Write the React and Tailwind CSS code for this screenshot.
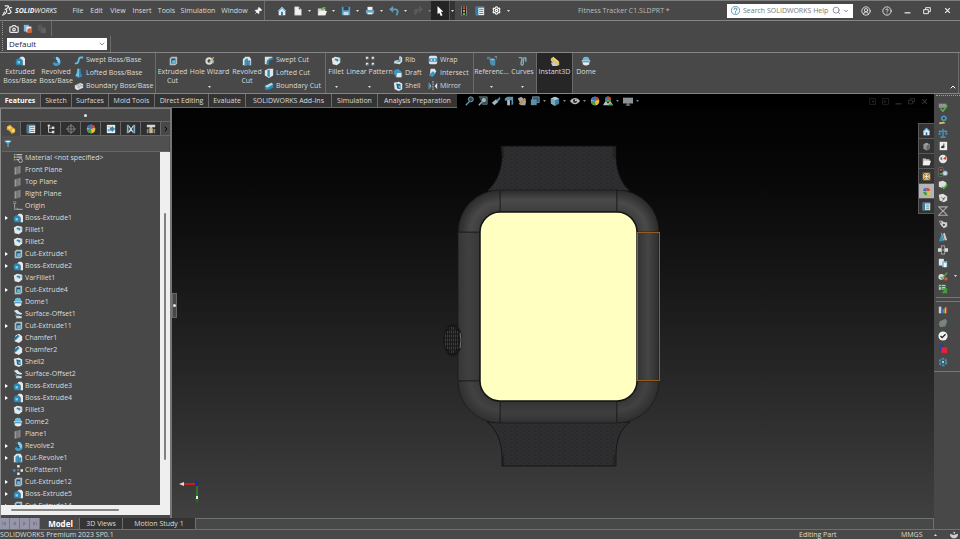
import { ChevronDown, ChevronUp, ChevronRight, Search, Settings, CircleUserRound, CircleHelp, Pin, Camera } from 'lucide-react'
import clsx from 'clsx'

// 12x12 drawings shared by the ribbon, the tree and the side bars
const GLYPHS = {
    extrude: (
        <>
            <path d="M5 3 7 1h3l2 2v8H9V6L7 5z" fill="#e4e8ea" />
            <path d="M1 5 3 3h4l2 2v6H2L1 9z" fill="#2b86b4" />
            <path d="M3 6h3v3H3z" fill="#7cc9ee" />
        </>
    ),
    revolve: (
        <>
            <path d="M2 2h5a5 5 0 1 1-5 7l2-2a3 3 0 1 0 1-4z" fill="#3f9cc9" />
            <path d="M6 1a5 5 0 0 1 4 8L6 6z" fill="#86cdec" />
            <circle cx="6" cy="6" r="1.6" fill="#205b7a" />
        </>
    ),
    sweep: <path d="M1 10h2c4 0 1-7 5-7h3" fill="none" stroke="#6bbbe0" strokeWidth="2.2" />,
    loft: (
        <>
            <path d="M4 1h4v4l2 5-4 2-5-2 2-4z" fill="#2f86b2" />
            <path d="M4 1h2v10l-4-2 2-4z" fill="#73c1e4" />
        </>
    ),
    boundary: (
        <>
            <path d="M1 5 8 2l3 2v4l-7 3-3-2z" fill="#dfe3e5" />
            <path d="M2 6l7-3M4 8l7-3M4 4l3 5M7 3l3 4" stroke="#8b9498" strokeWidth=".7" />
        </>
    ),
    cut: (
        <>
            <path d="M2 3 4 1h7v8l-2 2H2z" fill="#b4bdc1" />
            <path d="M4 3h5v6H4z" fill="#1f4f68" />
            <path d="M5 5h3l1-1v5H5z" fill="#69b8dc" />
        </>
    ),
    hole: (
        <>
            <circle cx="5" cy="6" r="4.5" fill="#d8dcde" />
            <circle cx="5" cy="6" r="2" fill="#3b4347" />
            <path d="M5 7l5-6 1 1-5 6z" fill="#e4a94a" />
            <path d="M9 4l2 2-1 3-2-1z" fill="#7ec3e2" />
        </>
    ),
    revcut: (
        <>
            <path d="M1 11V4l3-3h5l2 3v7H8V6L6 4v7z" fill="#dfe4e6" />
            <path d="M3 5l2-2h2v8H3zM8 5h2v6H8z" fill="#3992c0" />
        </>
    ),
    sweepcut: (
        <>
            <path d="M1 11V2h9v3H6v6z" fill="#dce1e3" />
            <path d="M3 11c0-5 2-7 8-8v2c-4 0-5 2-5 6z" fill="#2d82ae" />
        </>
    ),
    loftcut: (
        <>
            <path d="M1 3l4-2h6v8l-5 3-5-3z" fill="#e2e6e8" />
            <path d="M4 2h3v9L4 10z" fill="#3290bf" />
        </>
    ),
    boundcut: (
        <>
            <path d="M1 6l8-4 2 2v4l-7 3-3-1z" fill="#2f89b8" />
            <path d="M1 6l8-4 2 2-7 4z" fill="#a5dbf2" />
        </>
    ),
    fillet: (
        <>
            <path d="M1 3l4-2 6 1v6l-4 3-5-1z" fill="#e6e9ea" />
            <path d="M5 3c3 0 4 1 4 3l-2 1c0-2-1-2-3-2z" fill="#2e89b6" />
            <path d="M9 2l2 1v4L9 6z" fill="#a7d5e8" />
        </>
    ),
    pattern: (
        <>
            <path d="M1 1h3v3H1zM8 1h3v3H8zM1 8h3v3H1zM8 8h3v3H8z" fill="#e1e5e7" />
            <path d="M2 3h2v1H2zM9 3h2v1H9zM2 10h2v1H2zM9 10h2v1H9z" fill="#2c84b2" />
        </>
    ),
    rib: (
        <>
            <path d="M8 1l3 2v5l-3 3-7-1 1-3 5-1z" fill="#d6dde0" />
            <path d="M9 2v6l-6 1c3-1 5-3 6-7z" fill="#3f9ccb" />
        </>
    ),
    draft: (
        <>
            <path d="M1 3l5-2 5 4v6H4L1 7z" fill="#3d96c2" />
            <path d="M5 6h5v5H4z" fill="#e2e6e8" />
        </>
    ),
    shell: (
        <>
            <path d="M1 2l6-1 4 2v7l-4 2-5-2z" fill="#e2e6e8" />
            <path d="M4 3l5 1v6l-4-1z" fill="#1f6288" />
            <path d="M6 5l3 1v3l-2-1z" fill="#65b6dc" />
        </>
    ),
    wrap: (
        <>
            <rect x="1" y="1" width="10" height="10" rx="2" fill="#dce2e5" />
            <path d="M1 4h10v4H1z" fill="#3a93c0" />
            <path d="M3 5h2v2H3zM7 5h2v2H7z" fill="#d9edf6" />
        </>
    ),
    intersect: (
        <>
            <path d="M3 1h5l2 3-3 5H2z" fill="#e0e5e7" />
            <path d="M1 8l5-4 3 3-4 4z" fill="#3a95c3" />
        </>
    ),
    mirror: (
        <>
            <path d="M1 2l3 4-3 4zM11 2L8 6l3 4z" fill="#e2e6e8" />
            <path d="M1 2l2 2v4l-2 2z" fill="#3a95c3" />
            <path d="M6 0v12" stroke="#d9dde0" strokeDasharray="2 1" />
        </>
    ),
    reference: (
        <>
            <path d="M0 1h4v3H0z" fill="#47819e" />
            <path d="M3 4l3-1 4 1v7l-3 1-3-2z" fill="#4b8fb2" />
            <path d="M3 4l3-1 4 1-3 1z" fill="#8cc0d8" />
            <path d="M9 1h3v3" fill="none" stroke="#7fb3cc" />
        </>
    ),
    curves: <path d="M1 2h3c3 0-3 9 1 9 3 0 0-9 3-9s0 3 2 5" fill="none" stroke="#7fb0c6" strokeWidth="1.6" />,
    instant: (
        <>
            <path d="M1 3l3-2 7 6v4H9L1 6z" fill="#e5c35c" />
            <path d="M1 8l4-1 5 4-2 1H3z" fill="#c3cace" />
            <path d="M4 2l6 5" stroke="#fff3b0" />
        </>
    ),
    dome: (
        <>
            <path d="M2 5a4 4 0 0 1 8 0z" fill="#69b9df" />
            <path d="M2 7h8v3q-4 3-8 0z" fill="#e8ebec" />
            <path d="M1 5h10v2H1z" fill="#b9dff0" />
            <path d="M2 6.500h8v1H2z" fill="#2a7ca8" />
        </>
    ),
    chamfer: (
        <>
            <path d="M3 3l4-2 4 3v5l-4 3-5-2z" fill="#e6e9ea" />
            <path d="M1 7l5-5 2 2-5 5z" fill="#378fbc" />
            <path d="M2 7l4-4" stroke="#123d55" />
        </>
    ),
    surface: (
        <>
            <path d="M1 2l4-1 3 3 3 1-1 2-5-1z" fill="#dfe3e5" />
            <path d="M3 7l4 1 4 1-1 2H4z" fill="#cfd5d8" />
            <path d="M2 5l3 2 2 1-3 1z" fill="#3c95c0" />
        </>
    ),
    plane: (
        <>
            <path d="M2 3l7-2v9l-7 2z" fill="#858585" />
            <path d="M2 3l2-1v9l-2 1zM6 2v9" fill="#a9a9a9" stroke="#5f5f5f" strokeWidth=".7" />
        </>
    ),
    material: (
        <>
            <path d="M4 2h7M4 5h7M4 8h4" stroke="#bdbdbd" strokeWidth="1.500" />
            <path d="M1 1h2v2H1z" fill="#53b1da" />
            <path d="M1 4h2v2H1z" fill="#d7b64b" />
            <path d="M1 7h2v2H1z" fill="#6fb54c" />
            <circle cx="9" cy="9" r="2.300" fill="#444" stroke="#ccc" />
        </>
    ),
    origin: (
        <>
            <path d="M2 3v7h8" fill="none" stroke="#a0a0a0" strokeWidth="1.200" />
            <circle cx="2" cy="2" r="1.500" fill="none" stroke="#a0a0a0" />
            <path d="M5 8v2h7" fill="none" stroke="#a0a0a0" />
        </>
    ),
    circular: (
        <>
            <path d="M5 0h3v3H5zM5 9h3v3H5zM9 5h3v3H9z" fill="#e2e6e8" />
            <path d="M0 5h3v3H0z" fill="#3a95c3" />
            <path d="M5 6h2" stroke="#9ad0e8" />
        </>
    ),
    home: (
        <>
            <path d="M6 1l5 5h-1v5H2V6H1z" fill="#e9edef" />
            <path d="M6 1l5 5H9L6 3 3 6H1z" fill="#65b0d4" />
            <path d="M5 7h2v4H5z" fill="#236b92" />
        </>
    ),
    file: <path d="M2 1h5l3 3v7H2z M7 1v3h3" fill="#f1f1f1" stroke="#b5b5b5" strokeWidth=".6" />,
    open: (
        <>
            <path d="M1 3h4l1 1h4v7H1z" fill="#cfcfcf" />
            <path d="M3 6h9l-2 5H1z" fill="#f2f2f2" />
            <path d="M6 5c0-3 2-3 4-3" fill="none" stroke="#6ac03e" strokeWidth="1.800" />
        </>
    ),
    folder: (
        <>
            <path d="M1 2h4l1 1h4v8H1z" fill="#c2c2c2" />
            <path d="M3 5h9l-2 6H1z" fill="#f2f2f2" />
        </>
    ),
    save: (
        <>
            <path d="M1 1h10v10H1z" fill="#5a9fc2" />
            <path d="M3 1h6v4H3z" fill="#2f4652" />
            <path d="M3 7h6v4H3z" fill="#c6dbe5" />
        </>
    ),
    print: (
        <>
            <path d="M3 1h6v4H3z" fill="#eef1f2" />
            <path d="M1 5h10v4H1z" fill="#66aacb" />
            <path d="M3 8h6v2H3z" fill="#f2f5f6" />
        </>
    ),
    undo: (
        <>
            <path d="M4 4h4c3 0 3 4 1 7" fill="none" stroke="#5f9cba" strokeWidth="2.200" />
            <path d="M0 4l5-4v8z" fill="#5f9cba" />
        </>
    ),
    redo: <path d="M8 4H4C1 4 1 8 3 11M8 1l3 3-3 3z" fill="#5a5a5a" stroke="#5a5a5a" strokeWidth="1.500" />,
    cursor: <path d="M3 0l7 7H7l2 4-2 1-2-4-2 2z" fill="#fff" />,
    traffic: (
        <>
            <rect x="3" y="0" width="6" height="12" rx="1.500" fill="#222" stroke="#aaa" strokeWidth=".8" />
            <circle cx="6" cy="2.500" r="1.400" fill="#e04b35" />
            <circle cx="6" cy="6" r="1.400" fill="#bfa04a" />
            <circle cx="6" cy="9.500" r="1.400" fill="#5ac24a" />
        </>
    ),
    list: (
        <>
            <path d="M1 1h10v10H1z" fill="#e9eef0" />
            <path d="M1 1h3v10H1zM1 1h10v1H1z" fill="#347ea3" />
            <path d="M5 4h5M5 6.500h5M5 9h5" stroke="#397a9a" />
        </>
    ),
    tree: (
        <>
            <path d="M3 1v9h4M3 5h4" fill="none" stroke="#ddd" />
            <path d="M2 1h3v2H2zM7 3h3v3H7zM7 8h3v3H7z" fill="#dedede" />
        </>
    ),
    part: (
        <>
            <path d="M1 3l4-2 3 3 3 2v4l-4 2-3-4-3-1z" fill="#e5ae31" />
            <path d="M2 4l3-1 1 2-2 1zM7 7l3-1v3l-2 1z" fill="#ffe08a" />
        </>
    ),
    target: (
        <>
            <circle cx="6" cy="6" r="4" fill="none" stroke="#8d8d8d" />
            <path d="M6 0v12M0 6h12" stroke="#8d8d8d" />
        </>
    ),
    ball: (
        <>
            <circle cx="6" cy="6" r="5" fill="#e8e8e8" />
            <path d="M6 6V1a5 5 0 0 0-5 4z" fill="#3b6fc4" />
            <path d="M6 6l5-1a5 5 0 0 0-5-4z" fill="#d8402f" />
            <path d="M6 6l5-1a5 5 0 0 1-4 6z" fill="#e6bc32" />
            <path d="M6 6l1 5a5 5 0 0 1-6-5z" fill="#4a9e3c" />
        </>
    ),
    // appearance ball standing on a small scene
    scene: (
        <>
            <circle cx="6" cy="4" r="3.500" fill="#4a9e3c" />
            <path d="M6 4V.5a3.500 3.500 0 0 1 3.500 3.500z" fill="#d8402f" />
            <path d="M6 4V.5A3.500 3.500 0 0 0 2.500 4z" fill="#3b6fc4" />
            <path d="M0 11l3-5 3 3 3-3 3 5z" fill="#b9c1c5" />
            <path d="M6 11l3-3 3 3z" fill="#4a9e3c" />
        </>
    ),
    cam: (
        <>
            <path d="M1 1h10v10H1z" fill="#e7eef2" />
            <path d="M2 3h3v1H2zM2 6h2v3H2z" fill="#7fa5b7" />
            <path d="M5 4h2V2l4 4-4 4V8H4z" fill="#3d86aa" />
        </>
    ),
    caliper: (
        <>
            <path d="M1 1h2v10H1zM9 1h2v10H9z" fill="#7bb2cb" />
            <path d="M3 1l3 4 3-4v2L7 6l2 4v1L6 8l-3 3V9l2-3-2-3z" fill="#d5dde1" />
        </>
    ),
    bolt: (
        <>
            <path d="M1 1h10v3H8L6 5 4 4H1z" fill="#d5d5d5" />
            <path d="M4 5h4v6H4z" fill="#b9b9b9" />
            <path d="M4 5l4 2M4 8l4 2" stroke="#e2c03b" />
            <path d="M1 6h2v5H1zM9 6h2v5H9z" fill="#878787" />
        </>
    ),
    funnel: (
        <>
            <path d="M0 1h12L7 6v5l-2-1V6z" fill="#5ea9cd" />
            <path d="M2 1h8L8 3H4z" fill="#e9f4f9" />
        </>
    ),
    zoomfit: (
        <>
            <circle cx="7" cy="4" r="3" fill="#26495a" stroke="#89a9b8" />
            <path d="M5 7l-4 4" stroke="#6395ad" strokeWidth="1.800" />
        </>
    ),
    zoomarea: (
        <>
            <path d="M1 1h10v9H5" fill="#3c464b" stroke="#667b85" />
            <circle cx="7" cy="5" r="2.500" fill="#9bb6c3" />
            <path d="M5 7l-4 4" stroke="#9db1bb" strokeWidth="1.800" />
        </>
    ),
    brush: (
        <>
            <path d="M1 8l5-4 3 3-5 4z" fill="#a4b2b9" />
            <path d="M6 5l5-4v3L8 7z" fill="#568ba5" />
        </>
    ),
    section: (
        <>
            <path d="M1 3l3-2h7v9l-2 1V5H7v6H4V5L1 6z" fill="#5b93ad" />
            <path d="M4 5h3v6H4z" fill="#a9bfca" />
        </>
    ),
    pencil: (
        <>
            <path d="M1 3l4-2 6 5-1 5H5z" fill="#9ba7ad" />
            <path d="M2 9l7-7 2 2-7 7z" fill="#bd9052" />
        </>
    ),
    cube: (
        <>
            <path d="M1 3l5-2 5 2v6l-5 3-5-3z" fill="#447f9b" />
            <path d="M1 3l5 2 5-2-5-2z" fill="#b1cad5" />
            <path d="M6 5v7l-5-3V3z" fill="#7da7ba" />
        </>
    ),
    graycube: (
        <>
            <path d="M2 3l4-2 4 2v6l-4 2-4-2z" fill="#a8a8a8" />
            <path d="M6 5v6l4-2V3zM4 3v6" fill="#666" stroke="#777" />
        </>
    ),
    views: (
        <>
            <path d="M3 1h8v7H3z" fill="#34566a" stroke="#779fb3" />
            <path d="M1 4h7v7H1z" fill="#5f8ea6" />
        </>
    ),
    eye: (
        <>
            <path d="M0 6c3-5 9-5 12 0-3 5-9 5-12 0z" fill="#b9bdbf" />
            <circle cx="6" cy="6" r="2.500" fill="#2d3336" />
            <circle cx="7" cy="5" r="1" fill="#e8e8e8" />
        </>
    ),
    monitor: (
        <>
            <path d="M0 2h12v7H0z" fill="#8b9195" />
            <path d="M5 9h2v2H5z M3 11h6" fill="#777" stroke="#777" />
        </>
    ),
    palette: (
        <>
            <path d="M1 1h10v10H1z" fill="#d7b668" />
            <path d="M1 1l5 5 5-5M1 11l5-5 5 5" fill="none" stroke="#5c4b2b" />
            <circle cx="6" cy="6" r="1.800" fill="#f1e9d2" />
        </>
    ),
    snapshot: (
        <>
            <path d="M1 1h6v8H1z" fill="#7ab9d8" />
            <path d="M4 3h6v7H4z" fill="#e5ebee" />
            <circle cx="8" cy="8" r="3" fill="#d5613a" />
        </>
    ),
    shadow: (
        <>
            <path d="M1 1h5v3h4v7H4V8H1z" fill="#585858" />
            <circle cx="8" cy="8" r="3" fill="#626262" />
        </>
    ),
    check: (
        <>
            <path d="M1 2h9v5H1z" fill="#8f9496" />
            <path d="M3 8l3 3 5-7" fill="none" stroke="#55b043" strokeWidth="2" />
        </>
    ),
    measure: (
        <>
            <circle cx="7" cy="4" r="3.500" fill="#4c93b5" />
            <circle cx="7" cy="4" r="1.300" fill="#1d3946" />
            <path d="M1 9l6-1 2 2-7 1z" fill="#dfc259" />
        </>
    ),
    scale: (
        <>
            <path d="M6 1v9M1 4h10M3 11h6" stroke="#6d9ab0" strokeWidth="1.400" />
            <path d="M0 8l2-4 2 4zM8 8l2-4 2 4z" fill="#3f88ad" />
            <circle cx="6" cy="4" r="2" fill="#3f88ad" />
        </>
    ),
    sheet: (
        <>
            <path d="M2 1h9v10H2z" fill="#eee" />
            <path d="M7 3v5M4 8h3V6H5z" fill="#333" stroke="#333" />
        </>
    ),
    dial: (
        <>
            <circle cx="6" cy="6" r="5" fill="#e6e6e6" />
            <path d="M6 6l4-4v5z" fill="#c94334" />
            <path d="M3 4h2v3H3z" fill="#437fa0" />
        </>
    ),
    signal: (
        <>
            <path d="M1 1h5v10H1z" fill="#33201f" stroke="#999" strokeWidth=".6" />
            <circle cx="3.500" cy="3.500" r="1.500" fill="#d74d3f" />
            <circle cx="3.500" cy="8" r="1.500" fill="#50a345" />
            <circle cx="8.500" cy="7.500" r="3" fill="#cbd8de" stroke="#488aa9" />
        </>
    ),
    partcheck: (
        <>
            <path d="M1 2l5-1 4 2v5l-4 2-5-2z" fill="#dedede" />
            <path d="M5 8l2 2 4-5" fill="none" stroke="#55b043" strokeWidth="1.800" />
        </>
    ),
    partsym: (
        <>
            <path d="M1 2l5-1 5 3v5l-4 2-5-2z" fill="#e1e1e1" />
            <path d="M4 5l2 2 3-2M5 9l3-2" fill="none" stroke="#555" />
        </>
    ),
    sigma: <path d="M1 1h10L6 6l5 5H1l5-5z" fill="none" stroke="#a9a9a9" strokeWidth="1.300" />,
    gearpart: (
        <>
            <path d="M1 2h4l2 2h4v5l-4 2-4-4z" fill="#cbcbcb" />
            <circle cx="7" cy="7" r="2" fill="#494949" stroke="#eee" />
            <path d="M1 3h3v3z" fill="#6e6e6e" />
        </>
    ),
    bowl: (
        <>
            <path d="M0 4l5 2 7-2c0 5-3 7-6 7S0 9 0 4z" fill="#cfcfcf" />
            <path d="M5 1l3 1-2 3z" fill="#e8e8e8" />
        </>
    ),
    sketchpen: (
        <>
            <path d="M1 11l3-8 3 8z" fill="#3e8fb8" />
            <path d="M6 2l2-1 3 9H8z" fill="#c4cdd1" />
            <path d="M4 1l3 9" stroke="#8bcbe8" />
        </>
    ),
    move: (
        <>
            <path d="M4 1h4v10H4z" fill="none" stroke="#b5b5b5" />
            <path d="M0 4h4v4H0zM8 4h4v4H8z" fill="#dcdcdc" />
            <path d="M4 6h4" stroke="#b5b5b5" />
        </>
    ),
    docs: (
        <>
            <path d="M1 1h6v8H1z" fill="#e7e7e7" />
            <path d="M5 4h6v7H5z" fill="#88bfd8" />
            <path d="M7 6h3v5H7z" fill="#f3f3f3" />
        </>
    ),
    verify: (
        <>
            <circle cx="4" cy="7" r="3.500" fill="#ddd" />
            <path d="M3 7l2 2 6-7" fill="none" stroke="#55b043" strokeWidth="1.600" />
            <circle cx="9.500" cy="9.500" r="2" fill="#d85b41" />
        </>
    ),
    excel: (
        <>
            <path d="M1 1h8v6H1z" fill="#b9ccb9" />
            <path d="M1 3h8M4 1v6" stroke="#38693a" />
            <path d="M4 5h7v6H4l3-3z" fill="#3f9e3e" />
        </>
    ),
    rainbow: (
        <>
            <path d="M1 2h3v8H1z" fill="#d0d0d0" />
            <path d="M4 4h2v6H4z" fill="#3468c2" />
            <path d="M6 5h2v5H6z" fill="#39a24b" />
            <path d="M8 3h2v7H8z" fill="#e4c22d" />
            <path d="M10 2h1v8h-1z" fill="#d6452d" />
        </>
    ),
    stress: (
        <>
            <path d="M2 4l7-3 2 3-2 6-6 1-2-3z" fill="#5e8f85" />
            <path d="M4 5l4-2 1 3-3 3-2-1z" fill="#b0705f" />
        </>
    ),
    tick: (
        <>
            <circle cx="6" cy="6" r="5.500" fill="#f2f2f2" />
            <path d="M3 6l2 2 4-4" fill="none" stroke="#222" strokeWidth="1.600" />
        </>
    ),
    redblue: (
        <>
            <path d="M2 1h5v7H2z" fill="#2c3da0" />
            <path d="M4 4h7v7H4z" fill="#e02339" />
        </>
    ),
    wheel: (
        <>
            <circle cx="6" cy="6" r="4" fill="none" stroke="#3e8cb2" strokeWidth="2.500" strokeDasharray="3 1.200" />
            <circle cx="6" cy="6" r="1.500" fill="#9bcde3" />
        </>
    ),
    min: <path d="M1 10h10" stroke="currentColor" strokeWidth="2" />,
    restore: <path d="M4 4V1h7v6H8M1 4h7v6H1z" fill="none" stroke="currentColor" strokeWidth="1.400" />,
    close: <path d="M2 2l8 8M10 2l-8 8" stroke="currentColor" strokeWidth="1.800" />,
    paneLeft: <path d="M1 1h10v10H1zM8 4L5 6l3 2z" fill="none" stroke="currentColor" />,
    paneRight: <path d="M1 1h10v10H1zM4 4l3 2-3 2z" fill="none" stroke="currentColor" />,
    help: (
        <>
            <circle cx="6" cy="6" r="5.500" fill="#fff" stroke="#3c7c9c" />
            <path d="M4 5c0-3 4-2.500 4-.5C8 6 6 6 6 7.500M6 8.500V10" fill="none" stroke="#2b6e90" strokeWidth="1.200" />
        </>
    ),
}

const Glyph = ({ name, className = 'size-[10px]' }) => (
    <svg viewBox="0 0 12 12" className={clsx('shrink-0', className)} aria-hidden="true">
        {GLYPHS[name]}
    </svg>
)

const IconButton = ({ name, label, className = 'w-[13px]', icon }) => (
    <button type="button" aria-label={label} className={clsx('flex shrink-0 items-center justify-center', className)}>
        <Glyph name={name} className={icon} />
    </button>
)

const Caret = ({ className = '' }) => (
    <svg viewBox="0 0 3 2" className={clsx('h-[2px] w-[3px] shrink-0', className)} aria-hidden="true">
        <path d="M0 0h3L1.500 2z" fill="#ddd" />
    </svg>
)

const Logo = () => (
    <div className="flex w-[70px] shrink-0 items-center gap-[2px] pl-[2px] text-gray-100">
        <svg viewBox="0 0 12 12" className="size-[11px]" aria-hidden="true">
            <path d="M3 1h3c3 0 0 3-3 4M3 5c4-1 2 5-2 6l2-4M11 3c-3-1-4 1-2 3s0 4-3 3" fill="none" stroke="currentColor" strokeWidth="1.200" />
        </svg>
        <span className="italic">
            <b className="font-bold">SOLID</b>WORKS
        </span>
    </div>
)

const MENUS = [
    ['File', 'w-[16px]'],
    ['Edit', 'w-[21px]'],
    ['View', 'w-[22px]'],
    ['Insert', 'w-[26px]'],
    ['Tools', 'w-[23px]'],
    ['Simulation', 'w-[40px]'],
    ['Window', 'w-[33px]'],
]

const QUICK = [
    ['file', 'New'],
    ['open', 'Open'],
    ['save', 'Save'],
    ['print', 'Print'],
    ['undo', 'Undo'],
    ['redo', 'Redo'],
]

const TitleBar = () => (
    <header className="flex h-[21px] shrink-0 items-center border-t border-b border-t-[#7d7d7d] border-b-[#858585] bg-[#484848]">
        <Logo />
        <nav className="flex shrink-0 pt-px">
            {MENUS.map(([label, width]) => (
                <button key={label} type="button" className={clsx('text-center whitespace-nowrap', width)}>
                    {label}
                </button>
            ))}
        </nav>
        <button type="button" aria-label="Pin menu" className="flex w-[13px] shrink-0 justify-center">
            <Pin className="size-[8px] rotate-45 fill-white text-white" />
        </button>
        <div className="h-full border-l border-[#6c6c6c]" />
        <div className="flex h-full shrink-0 items-center pl-[10px]">
            <IconButton name="home" label="Home" className="w-[14px]" />
            {QUICK.map(([name, label]) => (
                <div key={name} className="flex w-[24px] items-center gap-[4px] pl-[3px]">
                    <IconButton name={name} label={label} className="w-[12px]" />
                    <Caret className={name === 'redo' ? 'opacity-40' : ''} />
                </div>
            ))}
            <button type="button" aria-label="Select" className="-ml-[2px] flex h-full w-[18px] items-center justify-center bg-[#242424]">
                <Glyph name="cursor" />
            </button>
            <button type="button" aria-label="Select options" className="flex h-full w-[6px] items-center justify-center border-l border-[#555] bg-[#333]">
                <Caret />
            </button>
            <IconButton name="traffic" label="Rebuild" className="w-[17px]" />
            <IconButton name="list" label="File properties" className="w-[16px]" />
            <button type="button" aria-label="Options" className="flex w-[17px] items-center justify-center">
                <Settings className="size-[9px] text-white" strokeWidth={3} />
            </button>
            <Caret className="ml-[2px]" />
        </div>
        <h1 className="ml-[68px] shrink-0 text-[#bdbdbd]">Fitness Tracker C1.SLDPRT *</h1>
        <label className="ml-auto flex h-[14px] w-[126px] shrink-0 items-center bg-white px-[4px]">
            <Glyph name="help" className="size-[9px]" />
            <input aria-label="Search SOLIDWORKS Help" placeholder="Search SOLIDWORKS Help" className="ml-[3px] min-w-0 flex-1 bg-white text-gray-700 outline-none placeholder:text-[#777]" />
            <Search className="size-[9px] text-gray-500" />
            <ChevronDown className="ml-[2px] size-[6px] text-gray-600" strokeWidth={3} />
        </label>
        <div className="flex shrink-0 items-center pr-[3px] pl-[2px] text-gray-100">
            <button type="button" aria-label="Account" className="flex w-[21px] justify-center">
                <CircleUserRound className="size-[10px]" />
            </button>
            <button type="button" aria-label="Help" className="flex w-[21px] justify-center">
                <CircleHelp className="size-[10px]" />
            </button>
            <IconButton name="min" label="Minimize" className="w-[20px]" icon="size-[7px]" />
            <IconButton name="restore" label="Restore" className="w-[20px]" icon="size-[8px]" />
            <IconButton name="close" label="Close" className="w-[20px]" icon="size-[7px]" />
        </div>
    </header>
)

const ConfigBars = () => (
    <div className="h-[32px] shrink-0 border-b border-[#858585] bg-[#484848]">
        <div className="flex h-[15px] w-[52px] items-center gap-[3px] border-r border-[#6c6c6c] pl-[2px]">
            <span className="h-[13px] border-l border-dotted border-[#999]" />
            <button type="button" aria-label="Screen capture" className="ml-[3px]">
                <Camera className="size-[10px] text-gray-200" strokeWidth={3} />
            </button>
            <IconButton name="snapshot" label="Capture settings" className="w-[11px]" />
            <IconButton name="shadow" label="Record" className="w-[11px]" />
        </div>
        <div className="flex h-[16px] w-[111px] items-center border-r border-[#6c6c6c] pl-[2px]">
            <span className="h-[13px] border-l border-dotted border-[#999]" />
            <div className="relative ml-[4px] h-[12px] w-[100px] bg-white">
                <select aria-label="Configuration" className="block h-full w-full appearance-none pl-[2px] text-[8px] leading-[12px] text-gray-800">
                    <option>Default</option>
                </select>
                <ChevronDown className="pointer-events-none absolute top-[2px] right-[1px] size-[8px] text-gray-600" />
            </div>
        </div>
    </div>
)

const BigTool = ({ icon, lines, width, menu, active }) => (
    <button
        type="button"
        className={clsx('flex h-full shrink-0 flex-col items-center pt-[3px] leading-[9px] whitespace-nowrap', width, active && 'bg-[#262626]')}
    >
        <Glyph name={icon} />
        <span className="mt-px">
            {lines.map((line) => (
                <span key={line} className="block">{line}</span>
            ))}
        </span>
        {menu && <Caret className="mt-auto mb-[5px]" />}
    </button>
)

const ToolColumn = ({ tools, width }) => (
    <div className={clsx('flex shrink-0 flex-col', width)}>
        {tools.map(([icon, label]) => (
            <button key={label} type="button" className="flex h-[13px] items-center gap-[2px] whitespace-nowrap">
                <Glyph name={icon} />
                {label}
            </button>
        ))}
    </div>
)

const RibbonGroup = ({ children, className = '' }) => (
    <div className={clsx('flex h-full shrink-0 border-r border-[#6c6c6c]', className)}>{children}</div>
)

const Ribbon = () => (
    <section aria-label="Features ribbon" className="flex h-[41px] shrink-0 border-b border-[#858585] bg-[#484848]">
        <RibbonGroup className="pl-[2px]">
            <BigTool icon="extrude" lines={['Extruded', 'Boss/Base']} width="w-[36px]" />
            <BigTool icon="revolve" lines={['Revolved', 'Boss/Base']} width="w-[36px]" />
            <ToolColumn width="w-[81px]" tools={[['sweep', 'Swept Boss/Base'], ['loft', 'Lofted Boss/Base'], ['boundary', 'Boundary Boss/Base']]} />
        </RibbonGroup>
        <RibbonGroup>
            <BigTool icon="cut" lines={['Extruded', 'Cut']} width="w-[33px]" />
            <BigTool icon="hole" lines={['Hole Wizard']} width="w-[41px]" menu />
            <BigTool icon="revcut" lines={['Revolved', 'Cut']} width="w-[34px]" />
            <ToolColumn width="w-[61px]" tools={[['sweepcut', 'Swept Cut'], ['loftcut', 'Lofted Cut'], ['boundcut', 'Boundary Cut']]} />
        </RibbonGroup>
        <RibbonGroup>
            <BigTool icon="fillet" lines={['Fillet']} width="w-[20px]" menu />
            <BigTool icon="pattern" lines={['Linear Pattern']} width="w-[47px]" menu />
            <ToolColumn width="w-[35px]" tools={[['rib', 'Rib'], ['draft', 'Draft'], ['shell', 'Shell']]} />
            <ToolColumn width="w-[45px]" tools={[['wrap', 'Wrap'], ['intersect', 'Intersect'], ['mirror', 'Mirror']]} />
        </RibbonGroup>
        <RibbonGroup>
            <BigTool icon="reference" lines={['Referenc...']} width="w-[35px]" menu />
            <BigTool icon="curves" lines={['Curves']} width="w-[27px]" menu />
        </RibbonGroup>
        <RibbonGroup>
            <BigTool icon="instant" lines={['Instant3D']} width="w-[35px]" active />
        </RibbonGroup>
        <BigTool icon="dome" lines={['Dome']} width="w-[26px]" />
        <button type="button" aria-label="Collapse ribbon" className="mr-px ml-auto flex items-end border-r border-[#6c6c6c] pr-px pb-[2px]">
            <ChevronUp className="size-[8px] text-white" strokeWidth={3} />
        </button>
    </section>
)

const TABS = [
    ['Features', 'w-[40px]'],
    ['Sketch', 'w-[31px]'],
    ['Surfaces', 'w-[37px]'],
    ['Mold Tools', 'w-[46px]'],
    ['Direct Editing', 'w-[54px]'],
    ['Evaluate', 'w-[37px]'],
    ['SOLIDWORKS Add-Ins', 'w-[86px]'],
    ['Simulation', 'w-[46px]'],
    ['Analysis Preparation', 'w-[80px]'],
]

const HEADS_UP = [
    ['zoomfit', 'Zoom to fit'],
    ['zoomarea', 'Zoom to area'],
    ['brush', 'Previous view'],
    ['section', 'Section view'],
    ['pencil', 'Dynamic annotation'],
    ['views', 'View orientation', true],
    ['cube', 'Display style', true],
    ['eye', 'Hide or show items', true],
    ['ball', 'Edit appearance'],
    ['scene', 'Apply scene', true],
    ['monitor', 'View settings', true],
]

const CommandTabs = () => (
    <div className="flex h-[14px] shrink-0 bg-black">
        <div role="tablist" className="flex shrink-0 border-b border-[#6c6c6c]">
            {TABS.map(([label, width], i) => (
                <button
                    key={label}
                    type="button"
                    role="tab"
                    aria-selected={i === 0}
                    className={clsx(
                        'text-center whitespace-nowrap',
                        width,
                        i === 0 ? 'bg-[#484848] font-bold text-white' : 'border-l border-[#6c6c6c] bg-[#343434]'
                    )}
                >
                    {label}
                </button>
            ))}
        </div>
        <div className="flex shrink-0 items-center pl-[6px]">
            {HEADS_UP.map(([name, label, menu]) => (
                <div key={label} className="flex items-center">
                    <IconButton name={name} label={label} />
                    {menu && <Caret className="mr-[2px] ml-[2px] opacity-60" />}
                </div>
            ))}
        </div>
        <div className="ml-auto flex items-center pr-[3px] text-[#333]">
            {['paneLeft', 'paneRight', 'min', 'restore', 'close'].map((name) => (
                <IconButton key={name} name={name} label={name} icon="size-[7px]" />
            ))}
        </div>
    </div>
)

const PANEL_TABS = ['part', 'list', 'tree', 'target', 'ball', 'cam', 'caliper', 'bolt']

const FEATURES = [
    ['material', 'Material <not specified>'],
    ['plane', 'Front Plane'],
    ['plane', 'Top Plane'],
    ['plane', 'Right Plane'],
    ['origin', 'Origin'],
    ['extrude', 'Boss-Extrude1', true],
    ['fillet', 'Fillet1'],
    ['fillet', 'Fillet2'],
    ['cut', 'Cut-Extrude1', true],
    ['extrude', 'Boss-Extrude2', true],
    ['fillet', 'VarFillet1'],
    ['cut', 'Cut-Extrude4', true],
    ['dome', 'Dome1'],
    ['surface', 'Surface-Offset1'],
    ['cut', 'Cut-Extrude11', true],
    ['chamfer', 'Chamfer1'],
    ['chamfer', 'Chamfer2'],
    ['shell', 'Shell2'],
    ['surface', 'Surface-Offset2'],
    ['extrude', 'Boss-Extrude3', true],
    ['extrude', 'Boss-Extrude4', true],
    ['fillet', 'Fillet3'],
    ['dome', 'Dome2'],
    ['plane', 'Plane1'],
    ['revolve', 'Revolve2', true],
    ['revcut', 'Cut-Revolve1', true],
    ['circular', 'CirPattern1'],
    ['cut', 'Cut-Extrude12', true],
    ['extrude', 'Boss-Extrude5', true],
    ['cut', 'Cut-Extrude14', true],
]

const FeaturePanel = () => (
    <aside className="flex w-[172px] shrink-0 flex-col border-t border-r-2 border-l border-t-[#7a7a7a] border-r-[#757575] border-l-[#8c8c8c] bg-[#484848]">
        <div className="flex h-[13px] shrink-0 items-center justify-center border-b border-[#666]">
            <span className="size-[3px] rounded-full bg-gray-200" />
        </div>
        <div className="flex h-[14px] shrink-0">
            {PANEL_TABS.map((name, i) => (
                <IconButton
                    key={name}
                    name={name}
                    label={name}
                    className={clsx('w-[20px] border-r border-[#666]', i === 0 ? 'bg-[#484848]' : 'border-b bg-[#303030]')}
                />
            ))}
            <button type="button" aria-label="More tabs" className="flex flex-1 items-center justify-center border-b border-[#666]">
                <ChevronRight className="size-[8px] text-black" strokeWidth={3} />
            </button>
        </div>
        <div className="mx-px flex h-[16px] shrink-0 items-center border-b border-[#666] bg-[#505050]">
            <IconButton name="funnel" label="Filter" className="w-[11px]" icon="size-[8px]" />
        </div>
        <div className="flex min-h-0 flex-1">
            <ul className="min-w-0 flex-1 overflow-hidden">
                {FEATURES.map(([icon, label, expandable]) => (
                    <li key={label} className="flex h-[12px] items-center whitespace-nowrap">
                        <span className="flex w-[12px] pl-[4px]">
                            {expandable && (
                                <svg viewBox="0 0 3 4" className="h-[4px] w-[3px]" aria-hidden="true">
                                    <path d="M0 0l3 2-3 2z" fill="#fff" />
                                </svg>
                            )}
                        </span>
                        <Glyph name={icon} />
                        <span className="pl-[2px]">{label}</span>
                    </li>
                ))}
            </ul>
            <div className="flex w-[10px] shrink-0 flex-col items-center bg-[#efefef]">
                <span className="mt-[61px] h-[70%] w-[2px] rounded bg-[#808080]" />
            </div>
        </div>
        <div className="flex h-[10px] shrink-0 items-center bg-[#efefef] pl-[10px]">
            <span className="h-[2px] w-[108px] rounded bg-[#858585]" />
        </div>
        <div className="h-[3px] shrink-0 bg-[#484848]" />
    </aside>
)

const Crown = () => (
    <g>
        <ellipse cx="452.500" cy="340" rx="9.500" ry="16.500" fill="#1b1b1b" />
        {[-7, -5, -3, -1, 1, 3, 5].map((dx) => (
            <path
                key={dx}
                d={`M${452.5 + dx} ${326 + Math.abs(dx)}V${354 - Math.abs(dx)}`}
                stroke="#4a4a4a"
                strokeWidth=".7"
            />
        ))}
        <path d="M448 326h9M446 330h13M445 334h15M444 338h17M444 342h17M445 346h15M446 350h13M448 354h9" stroke="#101010" strokeWidth=".8" />
        <path d="M460 333q2 7 0 15" fill="none" stroke="#777" />
    </g>
)

const Model = () => (
    <svg viewBox="172 108 762 410" className="block h-full w-full" role="img" aria-label="Fitness tracker model">
        <defs>
            <linearGradient id="top" x1="0" y1="0" x2="0" y2="1">
                <stop offset="0" stopColor="#2a2a2a" />
                <stop offset=".45" stopColor="#4a4a4a" />
                <stop offset="1" stopColor="#3d3d3d" />
            </linearGradient>
            <linearGradient id="bottom" x1="0" y1="0" x2="0" y2="1">
                <stop offset="0" stopColor="#343434" />
                <stop offset=".6" stopColor="#3e3e3e" />
                <stop offset="1" stopColor="#303030" />
            </linearGradient>
            <linearGradient id="left">
                <stop offset="0" stopColor="#363636" />
                <stop offset=".5" stopColor="#404040" />
                <stop offset="1" stopColor="#383838" />
            </linearGradient>
            <linearGradient id="right">
                <stop offset="0" stopColor="#323232" />
                <stop offset=".5" stopColor="#454545" />
                <stop offset="1" stopColor="#2d2d2d" />
            </linearGradient>
            <radialGradient id="tl" gradientUnits="userSpaceOnUse" cx="500" cy="232" r="42">
                <stop offset=".45" stopColor="#3b3b3b" />
                <stop offset=".7" stopColor="#484848" />
                <stop offset="1" stopColor="#2a2a2a" />
            </radialGradient>
            <radialGradient id="tr" gradientUnits="userSpaceOnUse" cx="617" cy="232" r="42">
                <stop offset=".45" stopColor="#3b3b3b" />
                <stop offset=".7" stopColor="#4a4a4a" />
                <stop offset="1" stopColor="#2a2a2a" />
            </radialGradient>
            <radialGradient id="bl" gradientUnits="userSpaceOnUse" cx="500" cy="381" r="42">
                <stop offset=".45" stopColor="#383838" />
                <stop offset=".7" stopColor="#424242" />
                <stop offset="1" stopColor="#303030" />
            </radialGradient>
            <radialGradient id="br" gradientUnits="userSpaceOnUse" cx="617" cy="381" r="42">
                <stop offset=".45" stopColor="#343434" />
                <stop offset=".7" stopColor="#424242" />
                <stop offset="1" stopColor="#2e2e2e" />
            </radialGradient>
            <pattern id="weave" width="6" height="4" patternUnits="userSpaceOnUse">
                <rect width="6" height="4" fill="#2c2c2f" />
                <path d="M0 1h4M3 3h3" stroke="#313134" strokeWidth=".8" />
                <path d="M4 1h2M0 3h3" stroke="#28282b" strokeWidth=".8" />
            </pattern>
        </defs>

        <g fill="url(#weave)" stroke="#101010" strokeWidth=".8">
            <path d="M501 146H616V158C617 172 621 183 630 191H487C496 183 501 172 502 158z" />
            <path d="M487 422H630C620 429 616 441 616 455V466H502V455C501 441 497 430 487 422z" />
        </g>
        <path d="M503 146v12M614 146v12M503 455v11M614 455v11" stroke="#181818" strokeWidth=".8" />

        <g stroke="#191919" strokeWidth=".7">
            <path d="M500 190H617V212H500z" fill="url(#top)" />
            <path d="M500 401H617V423H500z" fill="url(#bottom)" />
            <path d="M458 232H480V381H458z" fill="url(#left)" />
            <path d="M637 232H659V381H637z" fill="url(#right)" />
            <path d="M458 232A42 42 0 0 1 500 190V212A20 20 0 0 0 480 232z" fill="url(#tl)" />
            <path d="M659 232A42 42 0 0 0 617 190V212A20 20 0 0 1 637 232z" fill="url(#tr)" />
            <path d="M458 381A42 42 0 0 0 500 423V401A20 20 0 0 1 480 381z" fill="url(#bl)" />
            <path d="M659 381A42 42 0 0 1 617 423V401A20 20 0 0 0 637 381z" fill="url(#br)" />
        </g>
        <rect x="480" y="212" width="157" height="189" rx="20" fill="#ffffc1" stroke="#151515" strokeWidth="1.500" />
        <rect x="637.500" y="232.500" width="22" height="148" fill="none" stroke="#965b1e" />
        <Crown />

        {/* axis triad */}
        <path d="M197 484v13" stroke="#2b8a2b" strokeWidth="1.500" />
        <path d="M195 499h4l-2 5z" fill="#1d6b1d" />
        <path d="M196 496h2v3h-2z" fill="#d9f2d9" />
        <path d="M196 484h-14" stroke="#c02222" strokeWidth="2" />
        <path d="M179 484l5-2v4z" fill="#f0d0d0" />
        <path d="M195 481h3v5h-3z" fill="#2222c8" />
        <path d="M174 481l3 3M177 481l-3 3" stroke="#7c1c1c" strokeWidth=".8" />
    </svg>
)

const TASK_TABS = ['home', 'graycube', 'folder', 'palette', 'ball', 'list']

const Viewport = () => (
    <main className="relative min-w-0 flex-1 bg-linear-to-b from-[#020202] to-[#404040]">
        <Model />
        <button type="button" aria-label="Hide panel" className="absolute top-[185px] left-0 flex h-[25px] w-[5px] items-center justify-center border border-[#666] bg-[#484848]">
            <span className="size-[3px] shrink-0 rounded-full bg-gray-200" />
        </button>
        <div className="absolute top-[15px] right-0 flex w-[16px] flex-col border-t border-l border-[#5a5a5a]">
            {TASK_TABS.map((name) => (
                <IconButton
                    key={name}
                    name={name}
                    label={name}
                    className={clsx('h-[15px] border-b border-[#5a5a5a]', name === 'ball' ? 'bg-[#b4b4b4]' : 'bg-[#333]')}
                    icon="size-[9px]"
                />
            ))}
        </div>
    </main>
)

const BottomTabs = () => (
    <div className="flex h-[11px] shrink-0 bg-[#484848] leading-[11px]">
        {['M8 2L4 6l4 4zM2 2h1v8H2z', 'M8 2L4 6l4 4z', 'M4 2l4 4-4 4z', 'M4 2l4 4-4 4zM9 2h1v8H9z'].map((d) => (
            <button key={d} type="button" aria-label="Scroll tabs" className="flex w-[10px] shrink-0 items-center justify-center border-r border-[#77778a] bg-[#9696a8]">
                <svg viewBox="0 0 12 12" className="size-[7px]" aria-hidden="true">
                    <path d={d} fill="#74748a" />
                </svg>
            </button>
        ))}
        <div role="tablist" className="flex shrink-0 pl-[2px]">
            <button type="button" role="tab" aria-selected="true" className="w-[37px] text-[8px] font-bold text-white">Model</button>
            <button type="button" role="tab" aria-selected="false" className="w-[44px] border-x border-[#6c6c6c] bg-[#343434] whitespace-nowrap">3D Views</button>
            <button type="button" role="tab" aria-selected="false" className="w-[72px] bg-[#343434] whitespace-nowrap">Motion Study 1</button>
        </div>
        <div className="flex-1 border border-b-0 border-[#6b7370]" />
    </div>
)

const RIGHT_TOOLS = ['check', 'measure', 'scale', 'sheet', 'dial', 'signal', 'partcheck', 'partsym', 'sigma', 'gearpart', 'sketchpen', 'move', 'docs', 'verify', 'excel']
const SIM_TOOLS = ['rainbow', 'stress', 'tick', 'redblue', 'wheel']

const RightBar = () => (
    <aside className="flex w-[26px] shrink-0 flex-col bg-[#484848] pt-px">
        <div className="ml-[2px] border-t border-dotted border-[#9c9c9c]" />
        <div className="flex flex-col pt-[4px]">
            {RIGHT_TOOLS.map((name) => (
                <div key={name} className="flex h-[13px] items-center pl-[2px]">
                    <IconButton name={name} label={name} className="w-[13px]" />
                    {name === 'verify' && <Caret className="ml-[5px]" />}
                </div>
            ))}
        </div>
        <div className="mt-[2px] ml-[2px] h-[5px] border-y border-[#777]" />
        <div className="flex flex-col border-b border-[#777] pt-px pb-[3px]">
            {SIM_TOOLS.map((name) => (
                <div key={name} className="flex h-[13px] items-center pl-[2px]">
                    <IconButton name={name} label={name} className="w-[13px]" />
                </div>
            ))}
        </div>
    </aside>
)

const StatusBar = () => (
    <footer className="flex h-[10px] shrink-0 items-center border-t border-[#6b7370] bg-[#484848] leading-[9px]">
        <span>SOLIDWORKS Premium 2023 SP0.1</span>
        <span className="ml-auto w-[102px]">Editing Part</span>
        <span className="w-[33px]">MMGS</span>
        <Caret className="rotate-180" />
        <span className="flex w-[23px] justify-end pr-[2px]">
            <Glyph name="bowl" className="size-[8px]" />
        </span>
    </footer>
)

export default function App() {
    return (
        <div className="flex h-screen flex-col overflow-hidden bg-[#484848] font-['Open_Sans','Noto_Sans',sans-serif] text-[7px] leading-[10px] text-[#dcdcdc]">
            <TitleBar />
            <ConfigBars />
            <Ribbon />
            <div className="flex min-h-0 flex-1">
                <div className="flex min-w-0 flex-1 flex-col">
                    <CommandTabs />
                    <div className="flex min-h-0 flex-1">
                        <FeaturePanel />
                        <Viewport />
                    </div>
                    <BottomTabs />
                </div>
                <RightBar />
            </div>
            <StatusBar />
        </div>
    )
}
